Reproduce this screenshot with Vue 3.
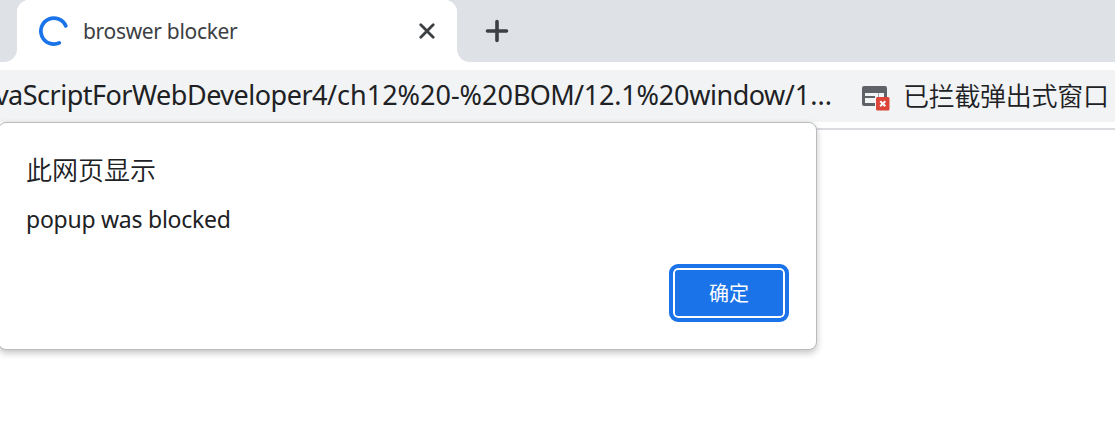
<script setup>
const tabTitle = 'broswer blocker'
const addressParts = [
  { text: 'vaScriptForWebDeveloper4', tone: 'tight' },
  { text: '/ch12%20-%20', tone: '' },
  { text: 'BOM', tone: 'caps' },
  { text: '/12.1%20', tone: 'snug' },
  { text: 'window', tone: 'tight' },
  { text: '/1...', tone: '' },
]
</script>

<template>
  <div class="browser">
    <header class="tabs">
      <div class="previous"></div>
      <div class="tab">
        <svg class="spinner" width="32" height="32" viewBox="0 0 32 32">
          <path d="M28.2 10.3A13 13 0 1 0 21.7 27.3" transform="translate(.6 .6)" />
        </svg>
        <span class="title">{{ tabTitle }}</span>
        <svg class="close" width="16" height="16" viewBox="0 0 16 16">
          <path d="M1.8 1.8L14.2 14.2M14.2 1.8L1.8 14.2" />
        </svg>
      </div>
      <div class="strip">
        <svg class="plus" width="24" height="24" viewBox="0 0 24 24">
          <path d="M12 2.5V21.5M2.5 12H21.5" />
        </svg>
      </div>
    </header>
    <div class="toolbar">
      <div class="address"><span v-for="part in addressParts" :key="part.text" :class="part.tone">{{ part.text }}</span></div>
      <svg class="blocked-icon" width="28" height="25" viewBox="0 0 28 25">
        <path d="M2 0H23a2 2 0 0 1 2 2V11H22V7H3V17H13V20H2a2 2 0 0 1-2-2V2a2 2 0 0 1 2-2Z" fill="#5f6368" />
        <path d="M3 11H13" stroke="#5f6368" stroke-width="2" />
        <path d="M16.5 7V11" stroke="#a7aaad" />
        <rect x="14" y="11" width="13.5" height="13.5" rx="1.5" fill="#db4437" />
        <path d="M18.2 15.2L23.3 20.3M23.3 15.2L18.2 20.3" stroke="#fff" stroke-width="2" />
      </svg>
      <span class="blocked">已拦截弹出式窗口</span>
    </div>
    <main class="page">
      <section class="dialog">
        <h1>此网页显示</h1>
        <p>popup was blocked</p>
        <button>确定</button>
      </section>
    </main>
  </div>
</template>

<style>
body { background: #fff; }
</style>

<style scoped>
.browser {
  width: 1115px;
  height: 434px;
  overflow: hidden;
  background: #fff;
  color: #202124;
  font-family: "Noto Sans", "Noto Sans CJK SC", sans-serif;
}
.tabs { display: flex; height: 62px; background: #fff; }
.previous {
  width: 17px;
  background: #dee1e6;
  border-bottom-right-radius: 13px;
}
.tab {
  box-sizing: border-box;
  display: flex;
  align-items: center;
  width: 440px;
  padding: 0 22px 0 20px;
  background: radial-gradient(circle at 13px 13px, #fff 13px, #dee1e6 13.7px) 0 0 / 13px 13px no-repeat,
    radial-gradient(circle at 0 13px, #fff 13px, #dee1e6 13.7px) 100% 0 / 13px 13px no-repeat, #fff;
}
.spinner path, .close path, .plus path { fill: none; stroke-linecap: round; }
.spinner path { stroke: #1a73e8; stroke-width: 3.7; }
.close path { stroke: #3c4043; stroke-width: 2.8; }
.plus path { stroke: #3c4043; stroke-width: 3.6; }
.title {
  margin-left: 14px;
  color: #3c4043;
  font-size: 21px;
  letter-spacing: -0.32px;
  line-height: 30px;
  padding-bottom: 1px;
  white-space: nowrap;
}
.close { margin-left: auto; }
.strip {
  display: flex;
  flex: 1;
  align-items: center;
  padding-left: 28px;
  background: #dee1e6;
  border-bottom-left-radius: 13px;
}
.toolbar {
  display: flex;
  align-items: center;
  height: 52px;
  margin-top: 8px;
  background: #f1f3f4;
}
.address {
  display: flex;
  justify-content: flex-end;
  width: 832px;
  overflow: hidden;
  font-size: 27px;
  line-height: 50px;
  height: 52px;
  white-space: nowrap;
}
.tight { letter-spacing: -0.5px; }
.snug { letter-spacing: -0.2px; }
.caps { letter-spacing: -0.7px; }
.blocked-icon { margin: 5px 0 0 30px; }
.blocked {
  margin-left: 13px;
  font-family: "Noto Sans CJK SC", sans-serif;
  font-size: 26px;
  font-weight: 350;
  letter-spacing: -0.3px;
  line-height: 50px;
  padding-bottom: 2px;
  white-space: nowrap;
}
.page { height: 304px; margin-top: 6px; border-top: 2px solid #dadce0; }
.dialog {
  position: relative;
  box-sizing: border-box;
  display: flex;
  flex-direction: column;
  width: 819px;
  height: 228px;
  margin: -8px 0 0 -2px;
  padding: 27px 27px 27px 27px;
  border: 1px solid #b8babb;
  border-radius: 8px;
  background: #fff;
  box-shadow: 0 3px 7px rgb(0 0 0 / 24%);
}
h1 {
  margin: 0;
  font-family: "Noto Sans CJK SC", sans-serif;
  font-size: 26px;
  font-weight: 350;
  line-height: 38px;
}
p { margin: 14px 0 0; font-size: 23px; letter-spacing: -0.25px; line-height: 34px; }
button {
  align-self: flex-end;
  width: 120px;
  height: 58px;
  margin-top: auto;
  border: 4px solid #1a73e8;
  border-radius: 9px;
  padding: 0 0 2px;
  background: #1a73e8;
  box-shadow: inset 0 0 0 2px #fff;
  color: #fff;
  font-family: "Noto Sans CJK SC", sans-serif;
  font-size: 20px;
}
</style>
